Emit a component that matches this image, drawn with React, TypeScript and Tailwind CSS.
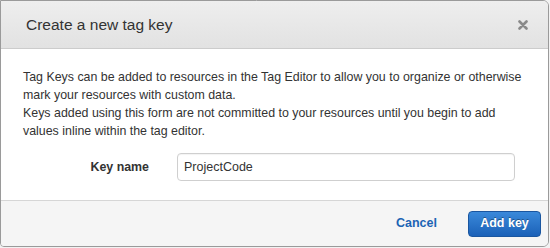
import { useState } from 'react'

export default function App() {
  const [keyName, setKeyName] = useState('ProjectCode')

  return (
    <div className="w-[550px] h-[248px] bg-[#f2f2f2] font-['Liberation_Sans',Arial,sans-serif]">
      <div className="w-[549px] h-[247px] flex flex-col bg-white border border-[#9a9a9a] rounded-r-[6px] rounded-bl-[4px] overflow-hidden">
        {/* Header */}
        <div className="h-[48px] shrink-0 flex items-center justify-between pl-[25px] pr-[15px] bg-gradient-to-b from-[#eeeeee] to-[#e2e2e2] border-b border-[#cccccc]">
          <h2 className="text-[15.5px] text-[#333333] leading-none">Create a new tag key</h2>
          <button className="w-[20px] h-[20px] flex items-center justify-center">
            <svg width="10" height="10" viewBox="0 0 10 10">
              <path d="M1.5 1.5 L8.5 8.5 M8.5 1.5 L1.5 8.5" stroke="#8a8a8a" strokeWidth="2.6" strokeLinecap="round" />
            </svg>
          </button>
        </div>

        {/* Body */}
        <div className="flex-1 pl-[22px] pr-[20px] pt-[19px]">
          <p className="text-[12.4px] leading-[18px] text-[#333333] whitespace-nowrap">
            Tag Keys can be added to resources in the Tag Editor to allow you to organize or otherwise
            <br />
            mark your resources with custom data.
            <br />
            Keys added using this form are not committed to your resources until you begin to add
            <br />
            values inline within the tag editor.
          </p>
          <div className="flex items-center mt-[13px]">
            <label className="w-[126px] text-right text-[12.4px] font-bold text-[#333333]">Key name</label>
            <input
              value={keyName}
              onChange={e => setKeyName(e.target.value)}
              className="ml-[28px] w-[338px] h-[28px] px-[6px] text-[12.5px] text-[#333333] border border-[#cfcfcf] rounded-[4px] outline-none shadow-[inset_0_1px_1px_rgba(0,0,0,0.05)]"
            />
          </div>
        </div>

        {/* Footer */}
        <div className="h-[46px] shrink-0 flex items-center justify-end gap-[31px] pr-[7px] bg-[#f5f5f5] border-t border-[#d6d6d6]">
          <button className="text-[12.5px] font-bold text-[#1c64b4]">Cancel</button>
          <button className="w-[73px] h-[26px] rounded-[4px] border border-[#1a56a0] bg-gradient-to-b from-[#3a89da] to-[#1b61b8] text-[12.5px] font-bold text-white [text-shadow:0_-1px_0_rgba(0,0,0,0.35)]">
            Add key
          </button>
        </div>
      </div>
    </div>
  )
}
